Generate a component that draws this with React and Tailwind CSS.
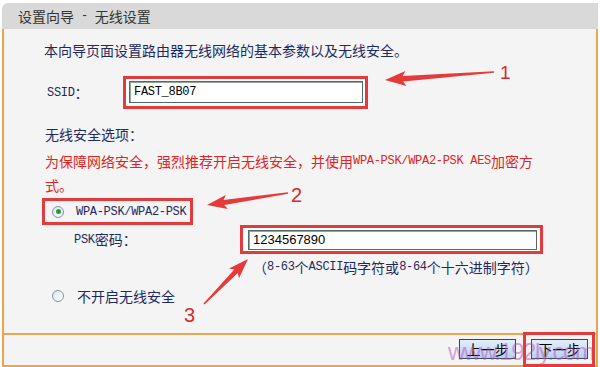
import React from 'react'

const mono = "font-['Liberation_Mono',monospace] text-[12px] tracking-[-0.3px]"

// tapered red annotation arrow: tip -> tail
function arrowPoints(tx, ty, sx, sy, headLen, headHalf, neckHalf, tailHalf) {
  const dx = sx - tx
  const dy = sy - ty
  const len = Math.hypot(dx, dy)
  const ux = dx / len
  const uy = dy / len
  const nx = -uy
  const ny = ux
  const bx = tx + ux * headLen
  const by = ty + uy * headLen
  const wx = tx + ux * (headLen + 3)
  const wy = ty + uy * (headLen + 3)
  const p = [
    [tx, ty],
    [wx + nx * headHalf, wy + ny * headHalf],
    [bx + nx * neckHalf, by + ny * neckHalf],
    [sx + nx * tailHalf, sy + ny * tailHalf],
    [sx - nx * tailHalf, sy - ny * tailHalf],
    [bx - nx * neckHalf, by - ny * neckHalf],
    [wx - nx * headHalf, wy - ny * headHalf],
  ]
  return p.map(([x, y]) => `${x.toFixed(1)},${y.toFixed(1)}`).join(' ')
}

const Radio = ({ checked }) => (
  <span className="w-[12px] h-[12px] rounded-full border border-[#7f93a8] bg-gradient-to-br from-[#dfe5ec] to-white flex items-center justify-center shrink-0">
    {checked && <span className="w-[5px] h-[5px] rounded-full bg-[#2f9a3c]" />}
  </span>
)

const Button = ({ children }) => (
  <button className="w-[57px] h-[20px] border border-[#2f4a5c] bg-gradient-to-b from-[#e4eefb] to-[#b9d0ef] text-[14px] text-black leading-none flex items-center justify-center">
    {children}
  </button>
)

export default function App() {
  return (
    <div className="w-[600px] h-[367px] bg-white relative overflow-hidden font-['Noto_Sans_CJK_SC',sans-serif]">
      <div className="mx-[2px] pt-[3px]">
        {/* Title bar */}
        <div className="h-[26px] bg-[#d9d9d9] rounded-tl-[6px] flex items-center pl-[16px] text-[14px] text-[#333]">
          设置向导<span className={mono}>&nbsp;-&nbsp;</span>无线设置
        </div>

        {/* Body */}
        <div className="h-[304px] border-x-2 border-[#e8a651] bg-[#f4f4f4] flex flex-col text-[14px] text-[#1e2a5e]">
          <div className="mt-[9px] h-[24px] flex items-center pl-[40px]">
            本向导页面设置路由器无线网络的基本参数以及无线安全。
          </div>

          <div className="mt-[14px] h-[33px] flex items-center pl-[43px]">
            <span className="w-[76px] flex items-center">
              <span className={mono}>SSID</span>：
            </span>
            <div className="border-[3px] border-[#e23b3b] pt-[2px] pb-[3px] pl-[3px] pr-[2px] bg-white">
              <div className="w-[234px] h-[22px] border border-[#4e6b66] shadow-[inset_1px_1px_0_#8fa5a0] bg-white flex items-center pl-[4px] text-black">
                <span className={mono}>FAST_8B07</span>
              </div>
            </div>
          </div>

          <div className="mt-[13px] h-[24px] flex items-center pl-[41px]">无线安全选项：</div>
          <div className="mt-[3px] h-[24px] flex items-center pl-[41px] text-[#e02424]">
            为保障网络安全，强烈推荐开启无线安全，并使用<span className={mono}>WPA-PSK/WPA2-PSK AES</span>加密方
          </div>
          <div className="h-[24px] flex items-center pl-[41px] text-[#e02424]">式。</div>

          <div className="mt-[1px] h-[27px] flex pl-[38px]">
            <div className="w-[151px] border-[3px] border-[#e23b3b] flex items-center pl-[7px] gap-[12px]">
              <Radio checked />
              <span className={mono}>WPA-PSK/WPA2-PSK</span>
            </div>
          </div>

          <div className="h-[29px] flex items-center pl-[70px]">
            <span className="w-[166px] flex items-center">
              <span className={mono}>PSK</span>密码：
            </span>
            <div className="border-[3px] border-[#e23b3b] pt-[2px] pb-[1px] pl-[5px] pr-[3px] bg-white">
              <div className="w-[289px] h-[20px] border border-[#4e6b66] shadow-[inset_1px_1px_0_#8fa5a0] bg-white flex items-center pl-[4px] text-[13px] text-black font-['Liberation_Sans',sans-serif]">
                1234567890
              </div>
            </div>
          </div>

          <div className="mt-[2px] h-[22px] flex items-center pl-[249px]">
            （<span className={mono}>8-63</span>个<span className={mono}>ASCII</span>码字符或<span className={mono}>8-64</span>个十六进制字符）
          </div>

          <div className="mt-[6px] h-[24px] flex items-center pl-[48px] gap-[13px]">
            <Radio />
            <span>不开启无线安全</span>
          </div>
        </div>

        {/* Footer */}
        <div className="h-[34px] border-x-2 border-y-2 border-[#e8a651] bg-[#f4f4f4] flex justify-end items-start pt-[4px] pr-[8px] gap-[15px]">
          <Button>上一步</Button>
          <Button>下一步</Button>
        </div>
      </div>

      {/* watermark */}
      <span className="absolute left-[448px] top-[340px] text-[24px] leading-none tracking-[-1.5px] text-[#b552b5] opacity-50 font-['Liberation_Sans',sans-serif] pointer-events-none">
        www.192ly.com
      </span>

      {/* annotations */}
      <div className="absolute left-[523px] top-[332px] w-[72px] h-[35px] border-[3px] border-[#e23b3b] pointer-events-none" />
      <svg className="absolute inset-0 pointer-events-none" width="600" height="367">
        <polygon points={arrowPoints(385, 80, 494, 72, 18, 7.5, 2.8, 0.7)} fill="#e63a3a" />
        <polygon points={arrowPoints(207, 205, 288, 193, 17, 7, 2.5, 0.7)} fill="#e63a3a" />
        <polygon points={arrowPoints(248, 259, 204, 304, 17, 7, 2.5, 0.7)} fill="#e63a3a" />
      </svg>
      <span className="absolute left-[500px] top-[63px] text-[19px] leading-none text-[#d42a2a] font-['Liberation_Sans',sans-serif]">1</span>
      <span className="absolute left-[291px] top-[185px] text-[20px] leading-none text-[#d42a2a] font-['Liberation_Sans',sans-serif]">2</span>
      <span className="absolute left-[184px] top-[305px] text-[20px] leading-none text-[#d42a2a] font-['Liberation_Sans',sans-serif]">3</span>
    </div>
  )
}
